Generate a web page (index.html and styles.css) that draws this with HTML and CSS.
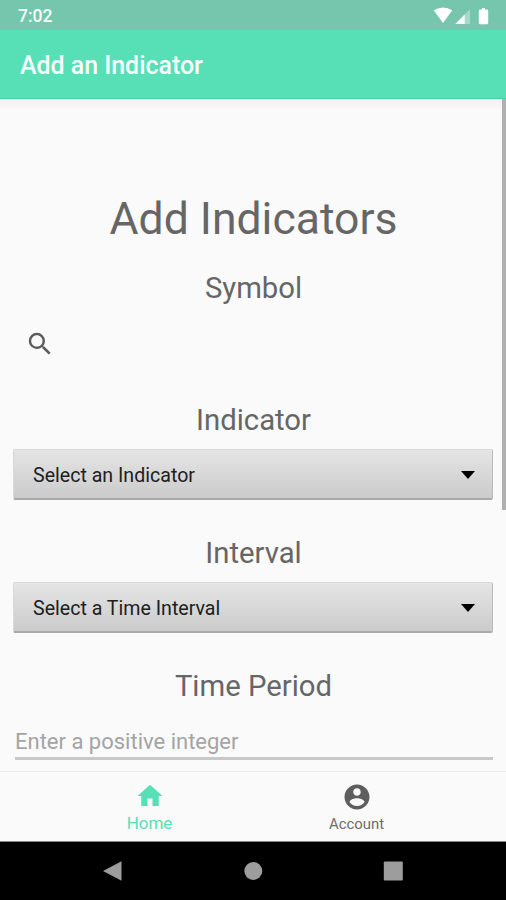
FILE: index.html
```html
<!DOCTYPE html>
<html lang="en">
<head>
<meta charset="utf-8">
<title>Add an Indicator</title>
<link rel="stylesheet" href="styles.css">
</head>
<body>
<div class="screen">
  <div class="status">
    <span class="clock">7:02</span>
    <svg class="status-icons" width="58" height="18" viewBox="0 0 58 18">
      <path d="M0.7 3.2Q10 -2.2 19.3 3.2L10 16Z"/>
      <path d="M22.3 17H37V2.300Z" opacity=".35"/>
      <path d="M22.3 17H31.7V7.600Z"/>
      <path d="M49 1h3v1.500h2q1.200 0 1.200 1.200v12.400q0 1.200-1.200 1.200h-7q-1.200 0-1.200-1.200V3.700q0-1.200 1.200-1.200h2z"/>
    </svg>
  </div>
  <header class="appbar"><span>Add an Indicator</span></header>
  <main class="content">
    <h1>Add Indicators</h1>
    <h2>Symbol</h2>
    <div class="search">
      <svg width="30" height="30" viewBox="0 0 24 24"><path fill="#5b5b5b" d="M15.5 14h-.79l-.28-.27A6.47 6.47 0 0 0 16 9.5 6.5 6.5 0 1 0 9.5 16c1.61 0 3.09-.59 4.23-1.57l.27.28v.79l5 4.99L20.49 19l-4.99-5zm-6 0C7.01 14 5 11.99 5 9.5S7.01 5 9.5 5 14 7.01 14 9.5 11.99 14 9.5 14z"/></svg>
    </div>
    <h2>Indicator</h2>
    <div class="select"><span>Select an Indicator</span><i class="caret"></i></div>
    <h2>Interval</h2>
    <div class="select"><span>Select a Time Interval</span><i class="caret"></i></div>
    <h2>Time Period</h2>
    <div class="field">Enter a positive integer</div>
    <div class="scrollbar"></div>
  </main>
  <nav class="tabs">
    <div class="tab active">
      <svg width="30" height="30" viewBox="0 0 24 24"><path fill="currentColor" d="M10 20v-6h4v6h5v-8h3L12 3 2 12h3v8z"/></svg>
      <span>Home</span>
    </div>
    <div class="tab">
      <svg width="30" height="30" viewBox="0 0 24 24"><path fill="currentColor" d="M12 2C6.48 2 2 6.48 2 12s4.48 10 10 10 10-4.48 10-10S17.52 2 12 2zm0 3c1.66 0 3 1.34 3 3s-1.34 3-3 3-3-1.34-3-3 1.34-3 3-3zm0 14.200c-2.500 0-4.710-1.280-6-3.220.030-1.990 4-3.080 6-3.080 1.990 0 5.970 1.090 6 3.080-1.290 1.940-3.500 3.220-6 3.220z"/></svg>
      <span>Account</span>
    </div>
  </nav>
  <div class="system">
    <svg width="22" height="22" viewBox="0 0 22 22"><path d="M1 11L19.500 1.300V20.700Z"/></svg>
    <svg width="22" height="22" viewBox="0 0 22 22"><circle cx="11.300" cy="11" r="9"/></svg>
    <svg width="22" height="22" viewBox="0 0 22 22"><rect x="1.800" y="1.500" width="19" height="19" rx="1"/></svg>
  </div>
</div>
</body>
</html>
```
FILE: styles.css
```css
* { box-sizing: border-box; }
body { margin: 0; font-family: Roboto, "Liberation Sans", sans-serif; background: #fafafa; }
.screen { width: 506px; height: 900px; display: flex; flex-direction: column; overflow: hidden; }
.status {
  height: 30px; flex: none; background: #76c6ad; color: #f3fffb;
  display: flex; align-items: center; justify-content: space-between; padding: 2px 15px 0 18px;
}
.clock { font-size: 17.5px; font-weight: 500; }
.status-icons { fill: #fff; margin-top: -1px; }
.appbar {
  height: 69px; flex: none; background: #57e0b5; color: #f8fffc; border-bottom: 1px solid #43d5a4;
  display: flex; align-items: center; padding: 3px 20px 0; font-size: 24.9px; font-weight: 500;
}
.content {
  height: 672px; flex: none; position: relative; padding: 92px 13px 0; color: #666;
  background: linear-gradient(#f1f0f3, #fafafa 12px);
}
h1, h2 { margin: 0; font-weight: 400; text-align: center; }
h1 { font-size: 44.5px; line-height: 56px; padding-left: 1px; }
h2 { font-size: 29.3px; line-height: 36px; height: 36px; padding-left: 1px; }
h1 + h2 { margin-top: 23px; }
.search { height: 96px; padding: 23px 0 0 12px; }
.select {
  height: 51px; margin: 11px 0 35px; padding: 2px 17px 0 19px; color: #202020; font-size: 19.6px;
  display: flex; align-items: center; justify-content: space-between;
  background: linear-gradient(#e5e5e5, #cbcbcb); border: 1px solid #d9d9d9;
  border-bottom: 2px solid #a9a9a9; border-right-color: #bbb; border-radius: 2px;
}
.caret { border: 7px solid transparent; border-top: 8px solid #000; border-bottom: 0; }
.field {
  margin: 18px 0 0 2px; height: 38px; border-bottom: 3px solid #c8c8c8;
  color: #a4a4a4; font-size: 22px; line-height: 40px;
}
.scrollbar { position: absolute; right: 0; top: 0; width: 4px; height: 411px; background: #b0b0b0; }
.tabs {
  height: 71px; flex: none; display: flex; justify-content: center; background: #fafafa;
  border-top: 1px solid #eee; border-bottom: 1px solid #888; color: #5e5e5e;
}
.tab { width: 207px; display: flex; flex-direction: column; align-items: center; padding-top: 10px; font-size: 14.9px; line-height: 24px; }
.tab span { color: #6c6c6c; }
.tab svg { display: block; }
.active { font-size: 17px; color: #57e0b5; }
.active svg { margin-top: -1px; }
.active span { color: #57e0b5; }
.system {
  flex: 1; background: #000; fill: #9d9d9d; display: flex; align-items: center;
  justify-content: space-between; padding: 0 102px;
}
```
